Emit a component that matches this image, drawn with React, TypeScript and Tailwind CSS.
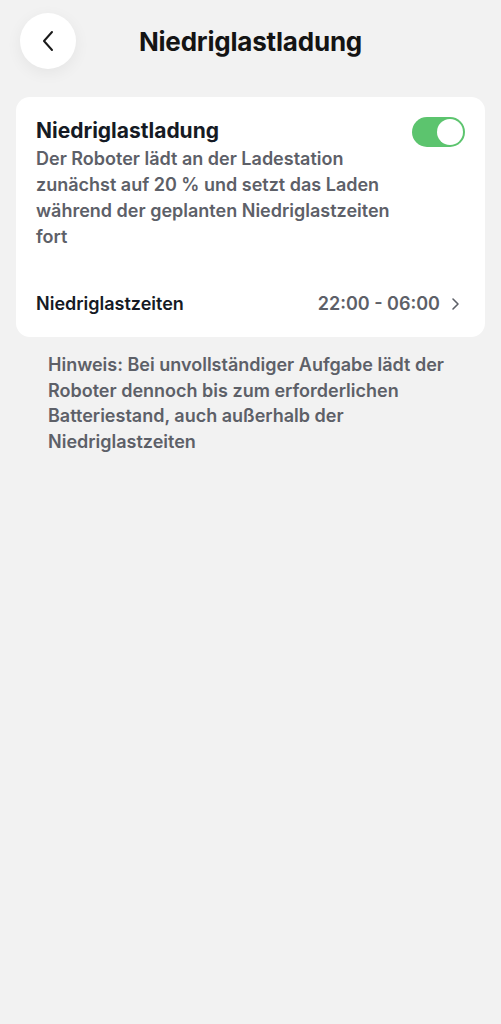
import React from "react";

export default function App() {
  return (
    <div className="min-h-[1024px] w-full bg-[#f2f2f2]" style={{ fontFamily: "Inter, 'Noto Sans', sans-serif" }}>
      <div className="relative flex h-[82px] items-center justify-center">
        <button className="absolute left-[20px] top-[13px] flex h-[56px] w-[56px] items-center justify-center rounded-full bg-white shadow-[0_4px_16px_rgba(0,0,0,0.06)]">
          <svg width="16" height="24" viewBox="0 0 16 24" fill="none">
            <path d="M12 3 L4 12 L12 21" stroke="#1a1a1a" strokeWidth="2" strokeLinecap="round" strokeLinejoin="round" />
          </svg>
        </button>
        <h1 className="text-[26px] font-bold tracking-[-0.2px] text-[#141414]">Niedriglastladung</h1>
      </div>

      <div className="mx-[16px] mt-[15px] rounded-[14px] bg-white px-[20px] pb-[20px] pt-[19px]">
        <div className="flex items-start justify-between">
          <div className="pr-2">
            <div className="text-[21px] font-bold leading-[30px] text-[#151a24]">Niedriglastladung</div>
            <div className="text-[18px] font-semibold leading-[26px] text-[#5d6068]">
              Der Roboter lädt an der Ladestation zunächst auf 20 % und setzt das Laden während der geplanten Niedriglastzeiten fort
            </div>
          </div>
          <div className="mt-[1px] flex h-[30px] w-[53px] shrink-0 items-center justify-end rounded-full bg-[#5cc46e] px-[2px]">
            <div className="h-[26px] w-[26px] rounded-full bg-white" />
          </div>
        </div>
        <div className="mt-[40px] flex items-center justify-between">
          <div className="text-[18px] font-semibold text-[#151a24]">Niedriglastzeiten</div>
          <div className="mr-[5px] flex items-center gap-[10px]">
            <span className="text-[18px] font-semibold text-[#5d6068]">22:00 - 06:00</span>
            <svg width="10" height="14" viewBox="0 0 10 14" fill="none">
              <path d="M3 2 L8 7 L3 12" stroke="#5d6068" strokeWidth="1.6" strokeLinecap="round" strokeLinejoin="round" />
            </svg>
          </div>
        </div>
      </div>

      <div className="px-[48px] pt-[15px] text-[18px] font-semibold leading-[25.5px] text-[#5d6068]">
        Hinweis: Bei unvollständiger Aufgabe lädt der Roboter dennoch bis zum erforderlichen Batteriestand, auch außerhalb der Niedriglastzeiten
      </div>
    </div>
  );
}
